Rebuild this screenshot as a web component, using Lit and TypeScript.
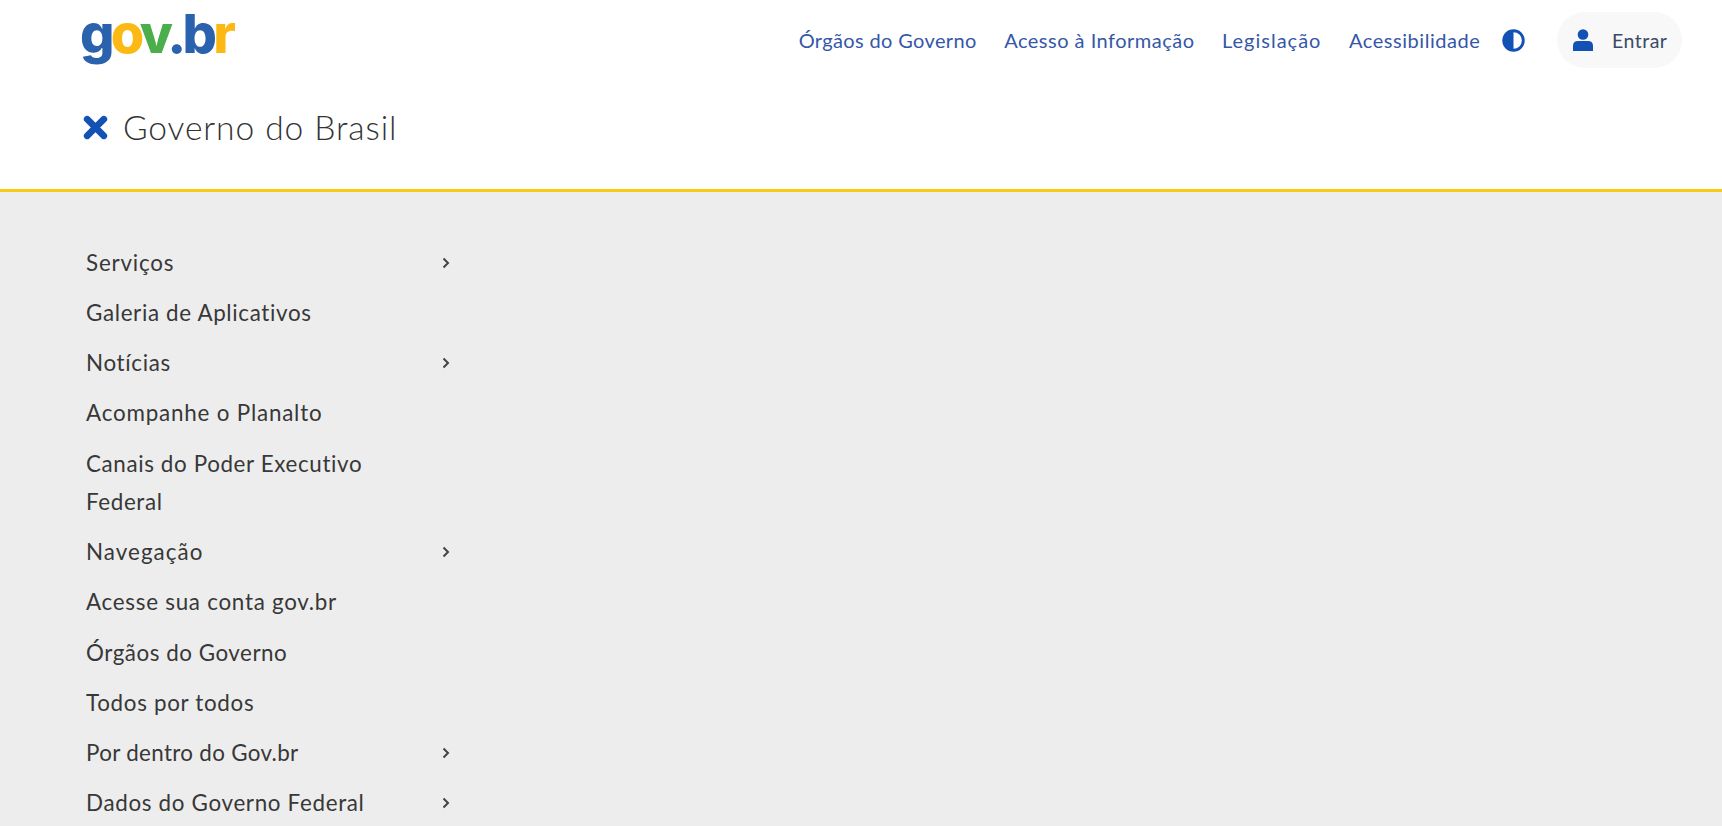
import { LitElement, html, css, svg } from "lit";
import { customElement } from "lit/decorators.js";

const chevron = svg`<svg class="chev" viewBox="0 0 10 14" width="10" height="14"><path d="M2.5 2.5 L7 7 L2.5 11.5" fill="none" stroke="#444" stroke-width="2"/></svg>`;

const links: { t: string; ls: number }[] = [
  { t: "Órgãos do Governo", ls: 0.36 },
  { t: "Acesso à Informação", ls: 0.49 },
  { t: "Legislação", ls: 0.99 },
  { t: "Acessibilidade", ls: 0.56 },
];

const items: { t: string; ls: number; sub?: boolean }[] = [
  { t: "Serviços", ls: 0.8, sub: true },
  { t: "Galeria de Aplicativos", ls: 0.65 },
  { t: "Notícias", ls: 0.68, sub: true },
  { t: "Acompanhe o Planalto", ls: 0.8 },
  { t: "Canais do Poder Executivo Federal", ls: 0.62 },
  { t: "Navegação", ls: 1.05, sub: true },
  { t: "Acesse sua conta gov.br", ls: 0.73 },
  { t: "Órgãos do Governo", ls: 0.52 },
  { t: "Todos por todos", ls: 0.68 },
  { t: "Por dentro do Gov.br", ls: 0.32, sub: true },
  { t: "Dados do Governo Federal", ls: 0.67, sub: true },
];

@customElement("app-root")
export class AppRoot extends LitElement {
  static styles = css`
    :host { display: block; height: 826px; overflow: hidden; background: #ededed; font-family: "Lato", "Liberation Sans", sans-serif; }
    header { background: #fff; border-bottom: 3px solid #fbcb14; box-sizing: border-box; height: 192px; padding: 0 40px 0 80px; display: flex; flex-direction: column; }
    .top { display: flex; align-items: center; height: 80px; }
    .logo { font-family: "Inter", sans-serif; font-weight: 800; font-size: 54px; letter-spacing: -3.7px; line-height: 56px; margin-top: -13px; }
    .b { color: #2a62ae; } .y { color: #fdb913; } .g { color: #4aae4a; }
    nav { margin-left: auto; display: flex; align-items: center; gap: 27.5px; font-size: 20px; color: #3557a7; }
    .contrast { margin: 0 32px 0 -6px; display: block; }
    .enter { display: flex; align-items: center; gap: 19px; width: 125px; height: 56px; box-sizing: border-box; padding-left: 16px; border-radius: 28px; background: #f8f8f8; color: #3a4a68; font-size: 19.5px; letter-spacing: .5px; }
    .title { display: flex; align-items: center; gap: 15px; margin: 25px 0 0 3px; font-size: 33.6px; font-weight: 300; letter-spacing: .9px; color: #333; line-height: 44px; }
    ul { list-style: none; margin: 0; padding: 46px 0 0 86px; width: 367px; box-sizing: content-box; }
    li { display: flex; justify-content: space-between; align-items: center; padding: 5.9px 0; font-size: 22.4px; line-height: 38.4px; color: #383838; }
    li span { max-width: 300px; }
    .chev { flex: none; margin-right: 2px; }
  `;

  render() {
    return html`
      <header>
        <div class="top">
          <div class="logo"><span class="b">g</span><span class="y">o</span><span class="g">v</span><span class="b">.b</span><span class="y">r</span></div>
          <nav>
            ${links.map((l) => html`<span style="letter-spacing:${l.ls}px">${l.t}</span>`)}
            <svg class="contrast" viewBox="0 0 24 24" width="23" height="23"><circle cx="12" cy="12" r="10.2" fill="none" stroke="#1351b4" stroke-width="3"/><path d="M12 2 A10 10 0 0 0 12 22 Z" fill="#1351b4"/></svg>
          </nav>
          <div class="enter">
            <svg viewBox="0 0 20 22" width="20" height="22"><circle cx="10" cy="5.5" r="5.3" fill="#1351b4"/><path d="M0 22 V17 Q0 12 5 12 H15 Q20 12 20 17 V22 Z" fill="#1351b4"/></svg>
            <span>Entrar</span>
          </div>
        </div>
        <div class="title">
          <svg viewBox="0 0 24 24" width="25" height="25"><path d="M4 4 L20 20 M20 4 L4 20" stroke="#1351b4" stroke-width="6.4" stroke-linecap="round"/></svg>
          <span>Governo do Brasil</span>
        </div>
      </header>
      <ul>
        ${items.map((i) => html`<li><span style="letter-spacing:${i.ls}px">${i.t}</span>${i.sub ? chevron : ""}</li>`)}
      </ul>
    `;
  }
}
